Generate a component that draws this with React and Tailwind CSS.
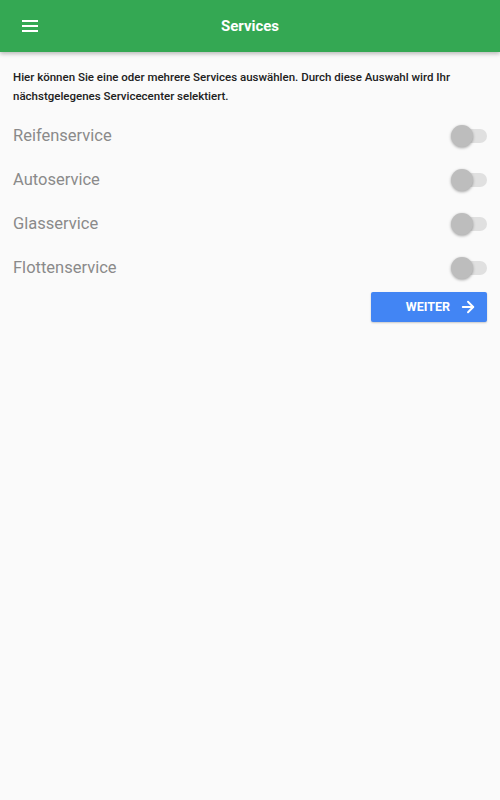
import { ArrowRight } from "lucide-react";

const services = ["Reifenservice", "Autoservice", "Glasservice", "Flottenservice"];

function Toggle() {
  return (
    <div className="relative w-[36px] h-[22px] flex items-center">
      <div className="ml-[3px] w-[34px] h-[14px] rounded-full bg-[#e0e0e0]" />
      <div className="absolute left-0 top-0 w-[22px] h-[22px] rounded-full bg-[#bdbdbd] shadow-[0_1px_3px_rgba(0,0,0,0.35)]" />
    </div>
  );
}

export default function App() {
  return (
    <div className="min-h-[800px] bg-[#fafafa] font-['Roboto',sans-serif]">
      <header className="h-[52px] bg-[#34a853] flex items-center px-[22px] relative shadow-[0_2px_4px_rgba(0,0,0,0.25)]">
        <div className="flex flex-col gap-[3px]">
          <span className="block w-[16px] h-[2px] bg-white" />
          <span className="block w-[16px] h-[2px] bg-white" />
          <span className="block w-[16px] h-[2px] bg-white" />
        </div>
        <h1 className="absolute left-0 right-0 text-center text-white font-bold text-[15px] pointer-events-none">
          Services
        </h1>
      </header>

      <div className="px-[13px] pt-[16px]">
        <p className="text-[11.5px] leading-[19px] font-medium text-[#212121]">
          Hier können Sie eine oder mehrere Services auswählen. Durch diese Auswahl wird Ihr nächstgelegenes Servicecenter selektiert.
        </p>

        <div className="mt-[8px]">
          {services.map((s) => (
            <div key={s} className="h-[44px] flex items-center justify-between">
              <span className="text-[16.5px] text-[#8a8a8a]">{s}</span>
              <Toggle />
            </div>
          ))}
        </div>

        <div className="flex justify-end mt-[2px]">
          <button className="w-[116px] h-[30px] bg-[#4285f4] text-white text-[12.5px] font-bold flex items-center justify-end gap-[9px] pr-[10px] rounded-[2px] shadow-[0_1px_2px_rgba(0,0,0,0.2)]">
            WEITER
            <ArrowRight size={18} strokeWidth={2.5} />
          </button>
        </div>
      </div>
    </div>
  );
}
